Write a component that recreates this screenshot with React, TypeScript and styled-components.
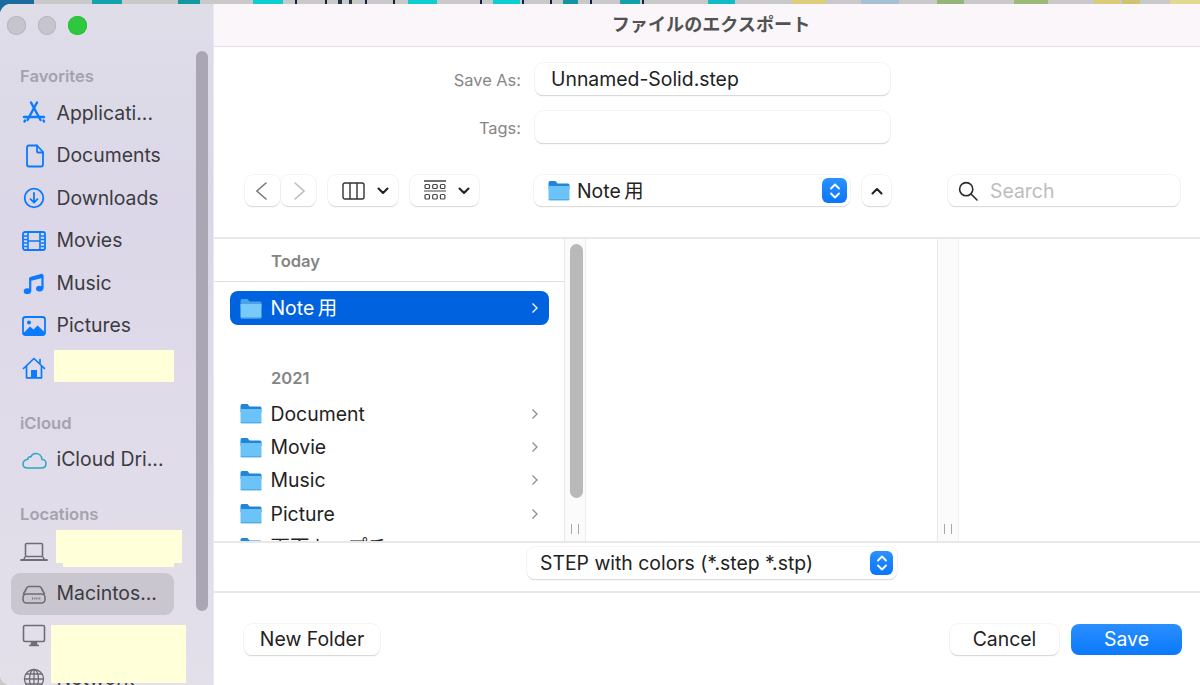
import React from "react";
import styled, { createGlobalStyle } from "styled-components";

const Global = createGlobalStyle`
  html, body { margin: 0; padding: 0; background: #c8c8c8; }
  body { font-family: Inter, "Noto Sans CJK JP", "Liberation Sans", sans-serif; }
  * { box-sizing: border-box; }
`;

const Page = styled.div`
  width: 1200px; height: 685px; overflow: hidden; display: flex; flex-direction: column; background: #c9c9c9;
`;
const Backdrop = styled.svg`
  display: block; width: 1200px; height: 14px; margin-bottom: -10px; flex: none;
`;
const Win = styled.div`
  position: relative; flex: 1; min-height: 0; display: flex; background: #fff;
  border-radius: 11px 0 0 11px; overflow: hidden;
`;
const Side = styled.aside`
  position: relative; width: 214px; flex: none; overflow: hidden;
  background: linear-gradient(180deg, #dfdde8 0%, #dbd7e8 30%, #dfdbe9 60%, #e3e0ea 100%);
  border-right: 1px solid #ece9f0;
`;
const Traffic = styled.div`
  height: 56px; display: flex; gap: 12px; padding: 12px 0 0 7px;
`;
const Light = styled.span<{ $on?: boolean }>`
  width: 18.5px; height: 18.5px; border-radius: 50%;
  background: ${p => (p.$on ? "#2ec840" : "#c6c4cd")};
  box-shadow: inset 0 0 0 1px ${p => (p.$on ? "#2cbf3c" : "#b8b6bf")};
`;
const SideLabel = styled.div<{ $gap?: boolean }>`
  height: 32px; line-height: 33px; padding-left: 20px; font-size: 16.6px; font-weight: 600; color: #a5a2ad;
  margin-top: ${p => (p.$gap ? "17px" : "0")};
`;
const SideRow = styled.div<{ $active?: boolean }>`
  position: relative; height: 42.5px; width: 163px; margin-left: 11px; padding-left: 9px;
  display: flex; align-items: center; gap: 8.5px; font-size: 19.4px; color: #3c3b40; white-space: nowrap;
  border-radius: 9px; background: ${p => (p.$active ? "#c9c6cf" : "transparent")};
`;
const SideText = styled.span`
  padding-bottom: 1px;
`;
const IconCell = styled.span`
  width: 28px; height: 28px; flex: none; display: block;
  svg { display: block; width: 28px; height: 28px; }
`;
const Redact = styled.div<{ $l: number; $t: number; $w: number; $h: number }>`
  position: absolute; z-index: 2; background: #ffffd9;
  left: ${p => p.$l}px; top: ${p => p.$t}px; width: ${p => p.$w}px; height: ${p => p.$h}px;
`;
const SideThumb = styled.div`
  position: absolute; left: 196px; top: 47px; width: 12px; height: 560px; border-radius: 6px; background: #aaa6b3;
`;
const Main = styled.main`
  flex: 1; min-width: 0; display: flex; flex-direction: column;
`;
const TitleBar = styled.header`
  height: 43px; flex: none; display: flex; align-items: center; justify-content: center; padding: 0 0 4px 8px;
  background: #faf6fa; border-bottom: 1px solid #e2e0e2;
  font-family: "Noto Sans CJK JP", sans-serif; font-size: 18.1px; font-weight: 700; color: #525252;
`;
const Form = styled.section`
  height: 192px; flex: none; padding-top: 16px; border-bottom: 2px solid #e8e8e8;
`;
const Field = styled.div`
  display: flex; align-items: center; gap: 14px; margin-bottom: 16px;
`;
const FieldLabel = styled.label`
  width: 307px; text-align: right; font-size: 16.4px; color: #868686; padding-top: 1px;
`;
const Input = styled.div`
  width: 355px; height: 32px; padding-left: 16px; border-radius: 8px; background: #fff;
  display: flex; align-items: center; font-size: 19.4px; color: #222;
  box-shadow: 0 0 0 .5px #ececec, 0 1px 1px 0 #c4c4c4;
`;
const Toolbar = styled.div`
  display: flex; align-items: center; padding: 16px 0 0 31px;
`;
const Btn = styled.div<{ $w: number; $ml?: number; $pl?: number }>`
  width: ${p => p.$w}px; height: 31px; flex: none; margin-left: ${p => p.$ml ?? 0}px; border-radius: 8px; background: #fff;
  padding-left: ${p => p.$pl ?? 0}px;
  display: flex; align-items: center; justify-content: center;
  box-shadow: 0 0 0 .5px #ececec, 0 1px 1px 0 #c8c8c8;
  svg { display: block; }
`;
const PopBtn = styled(Btn)`
  justify-content: flex-start; padding: 0 3px 0 14px; font-size: 19.4px; line-height: 24px; color: #222;
`;
const FolderSlot = styled.span`
  margin-right: 7px; flex: none; display: block; svg { display: block; }
`;
const PopText = styled.span`
  flex: 1; white-space: nowrap;
`;
const Stepper = styled.span<{ $w: number; $h: number }>`
  width: ${p => p.$w}px; height: ${p => p.$h}px; border-radius: 6px; flex: none;
  background: linear-gradient(180deg, #2a91ff, #0a76fb); display: flex; align-items: center; justify-content: center;
`;
const SearchText = styled.span`
  font-size: 19.4px; color: #bdbdbd; margin-left: 12px;
`;
const SearchBtn = styled(Btn)`
  justify-content: flex-start; padding-left: 10px;
`;
const CaretGap = styled.span`
  width: 12px; flex: none;
`;
const Browser = styled.section`
  height: 302px; flex: none; display: flex; overflow: hidden;
`;
const Col = styled.div<{ $w?: number }>`
  width: ${p => (p.$w ? `${p.$w}px` : "auto")}; flex: ${p => (p.$w ? "none" : "1")}; overflow: hidden;
`;
const ColHead = styled.div`
  height: 43px; padding-left: 57px; font-size: 16.6px; font-weight: 600; color: #858585; line-height: 44px;
  border-bottom: 1px solid #e2e2e2; margin-bottom: 9px;
`;
const YearHead = styled.div`
  height: 34px; margin-top: 36px; margin-bottom: 2px; padding-left: 57px; font-size: 16.6px; font-weight: 600; color: #858585; line-height: 34px;
`;
const FileRow = styled.div<{ $sel?: boolean }>`
  height: ${p => (p.$sel ? "34px" : "33.4px")}; margin: 0 15px 0 16px; padding: 0 10px; border-radius: 8px;
  display: flex; align-items: center; font-size: 19.4px; line-height: 24px; white-space: nowrap;
  color: ${p => (p.$sel ? "#fff" : "#222")}; background: ${p => (p.$sel ? "#0062de" : "transparent")};
`;
const FileName = styled.span`
  flex: 1; margin-left: 8.5px;
`;
const Gutter = styled.div`
  position: relative; width: 22px; flex: none; background: #fbfbfb;
  border-left: 1px solid #e8e8e8; border-right: 1px solid #efefef;
`;
const Thumb = styled.div`
  position: absolute; left: 5px; top: 5px; width: 13px; height: 254px; border-radius: 7px; background: #b9b9b9;
`;
const Grip = styled.div`
  position: absolute; left: 6px; bottom: 7px; width: 8px; height: 10px;
  border-left: 1px solid #a8a8a8; border-right: 1px solid #a8a8a8;
`;
const FormatRow = styled.section`
  height: 52px; flex: none; padding: 4px 0 0 313px; border-top: 2px solid #e8e8e8; border-bottom: 2px solid #e8e8e8;
`;
const FormatBtn = styled(PopBtn)`
  height: 32px; padding: 0 4px 0 13px;
`;
const Footer = styled.footer`
  flex: 1; display: flex; justify-content: space-between; padding: 31px 18px 0 30px;
`;
const FootRight = styled.div`
  display: flex; gap: 12px;
`;
const ActionBtn = styled(Btn)<{ $primary?: boolean }>`
  font-size: 19.4px; padding-bottom: 2px; color: ${p => (p.$primary ? "#fff" : "#222")};
  background: ${p => (p.$primary ? "linear-gradient(180deg, #2a8fff, #0a79fb)" : "#fff")};
  box-shadow: ${p => (p.$primary ? "none" : "0 0 0 .5px #ececec, 0 1px 1px 0 #c4c4c4")};
`;

const BLUE = "#0a7aff";
const GRAY = "#6f6c74";
const Ico = ({ children }: { children: React.ReactNode }) => (
  <IconCell>
    <svg viewBox="0 0 28 28" fill="none" strokeLinecap="round" strokeLinejoin="round">{children}</svg>
  </IconCell>
);
const AppsIcon = () => (
  <Ico><g stroke={BLUE} strokeWidth="2.4"><path d="M11 3.5 L20.5 21" /><path d="M17 3.5 L7.5 21" /><path d="M4 18 H24" /><path d="M5 21.5 L4.5 22.5" /><path d="M23.5 21.5 L24 22.5" /></g></Ico>
);
const DocIcon = () => (
  <Ico><g stroke={BLUE} strokeWidth="1.8"><path d="M9 3.5 H17 L23 10 V22.5 Q23 24.5 21 24.5 H9 Q7 24.5 7 22.5 V5.5 Q7 3.5 9 3.5 Z" /><path d="M17 3.5 V9.5 Q17 10.5 18 10.5 H23" /></g></Ico>
);
const DownIcon = () => (
  <Ico><g stroke={BLUE} strokeWidth="1.8"><circle cx="14" cy="14" r="9.3" /><path d="M14 9 V18.5 M10.5 15.2 L14 18.7 L17.5 15.2" /></g></Ico>
);
const FilmIcon = () => (
  <Ico><rect x="3" y="5" width="22" height="18" rx="2" stroke={BLUE} strokeWidth="1.8" /><path d="M8 5 V23 M20 5 V23 M8 14 H20" stroke={BLUE} strokeWidth="1.6" /><path d="M4 9 H7 M4 12.5 H7 M4 16 H7 M4 19.5 H7 M21 9 H24 M21 12.5 H24 M21 16 H24 M21 19.5 H24" stroke={BLUE} strokeWidth="1.5" /></Ico>
);
const MusicIcon = () => (
  <Ico><path d="M10.2 9.5 L22.5 6.5 V19" stroke={BLUE} strokeWidth="2.2" /><path d="M10.2 8 L22.5 4.5 V9 L10.2 12 Z" fill={BLUE} /><path d="M10.2 9.5 V22" stroke={BLUE} strokeWidth="2.2" /><ellipse cx="7.4" cy="22.2" rx="3.6" ry="2.9" fill={BLUE} /><ellipse cx="19.6" cy="19.6" rx="3.6" ry="2.9" fill={BLUE} /></Ico>
);
const PicIcon = () => (
  <Ico><rect x="3" y="5" width="22" height="18" rx="2.5" stroke={BLUE} strokeWidth="1.8" /><circle cx="9" cy="10.5" r="2" fill={BLUE} /><path d="M3.5 21 L10 14.5 L13.5 17.5 L17.5 13.5 L24.5 20 V21 Q24.5 23 22.5 23 H5.5 Q3.5 23 3.5 21 Z" fill={BLUE} /></Ico>
);
const HomeIcon = () => (
  <Ico><g stroke={BLUE} strokeWidth="1.7"><path d="M3.5 14.5 L14 4.5 L24.5 14.5" /><path d="M6.5 12.5 V23.8 H21.5 V12.5" /><path d="M20 5.5 V9" /></g><rect x="11" y="16" width="6" height="8" fill={BLUE} /></Ico>
);
const CloudIcon = () => (
  <Ico><path d="M7.5 22 H21 C24.5 22 26 19.8 26 17.5 C26 15 24 13.4 22 13.4 C21.6 9.5 18.8 7.5 16 7.5 C13.5 7.5 11.6 9 10.8 11 C9.8 10.4 7.8 11 7.8 13.2 C4.5 13.8 3 16 3 18 C3 20.5 5 22 7.5 22 Z" stroke="#2ba5c6" strokeWidth="1.5" /></Ico>
);
const LaptopIcon = () => (
  <Ico><g stroke={GRAY} strokeWidth="1.6"><rect x="5.5" y="6.5" width="17" height="13" rx="1" /><path d="M1 23 H27" strokeWidth="1.8" /><path d="M5 20 L3.5 23 M23 20 L24.5 23" /></g></Ico>
);
const DiskIcon = () => (
  <Ico><g stroke={GRAY} strokeWidth="1.6"><path d="M9 6.5 H19 Q20.5 6.5 21.3 8 L24.5 14 M9 6.5 Q7.5 6.5 6.7 8 L3.5 14 M9 6.5 H19" /><rect x="3" y="14" width="22" height="9" rx="3.5" /><path d="M12 18.5 H21" strokeDasharray="1 1.2" strokeLinecap="butt" strokeWidth="2" /></g></Ico>
);
const DeskIcon = () => (
  <Ico><rect x="3.5" y="3.5" width="21" height="16" rx="1.5" stroke={GRAY} strokeWidth="1.6" /><path d="M11 20 H17 L17.5 23 H10.5 Z" fill={GRAY} /><path d="M9.5 23.5 H18.5" stroke={GRAY} strokeWidth="1.4" /></Ico>
);
const GlobeIcon = () => (
  <Ico><g stroke={GRAY} strokeWidth="1.3"><circle cx="14" cy="14" r="9.5" /><ellipse cx="14" cy="14" rx="4.5" ry="9.5" /><path d="M14 4.5 V23.5 M4.5 14 H23.5 M6 9 H22 M6 19 H22" /></g></Ico>
);
const Folder = ({ light }: { light?: boolean }) => (
  <svg width="22" height="21" viewBox="0 0 22 21">
    <path d="M0.5 3 Q0.5 1 2 1 H7.5 L9.5 3.5 H20 Q21.5 3.5 21.5 5 V9 H0.5 Z" fill={light ? "#4ba3e6" : "#2186d8"} />
    <path d="M0.5 6 H21.5 V19 Q21.5 20.5 20 20.5 H2 Q0.5 20.5 0.5 19 Z" fill={light ? "#78cafa" : "#6cc3f8"} />
    <path d="M0.5 19.6 H21.5" stroke="#3f93cc" strokeOpacity=".55" />
  </svg>
);
const Chev = ({ white }: { white?: boolean }) => (
  <svg width="8" height="12" viewBox="0 0 8 12" fill="none"><path d="M1.5 1.5 L6 6 L1.5 10.5" stroke={white ? "#fff" : "#8e8e8e"} strokeWidth="1.3" /></svg>
);
const Stepper2 = () => (
  <svg width="12" height="18" viewBox="0 0 12 18" fill="none" stroke="#fff" strokeWidth="1.8" strokeLinecap="round" strokeLinejoin="round"><path d="M2 6.5 L6 2.5 L10 6.5 M2 11.5 L6 15.5 L10 11.5" /></svg>
);
const Caret = () => (
  <svg width="12" height="8" viewBox="0 0 12 8" fill="none" stroke="#222" strokeWidth="2.1" strokeLinecap="round" strokeLinejoin="round"><path d="M1.5 1.5 L6 6 L10.5 1.5" /></svg>
);

const strip: [number, number, string][] = [
  [0, 34, "#1b6c9c"], [92, 122, "#14a3ad"], [178, 200, "#109aa0"], [253, 283, "#0ccdd0"], [295, 297, "#124"], [325, 327, "#124"],
  [338, 342, "#234"], [349, 352, "#234"], [365, 367, "#124"], [393, 395, "#124"], [408, 437, "#0ccdd0"], [480, 482, "#124"],
  [493, 520, "#0ccdd0"], [522, 524, "#124"], [550, 552, "#124"], [563, 578, "#1296a4"], [590, 592, "#124"], [620, 640, "#12a0aa"],
  [642, 644, "#124"], [708, 735, "#11bcc4"], [792, 826, "#dccd7a"], [861, 899, "#a9bfd6"], [937, 964, "#93b578"], [1014, 1048, "#9abb78"],
  [1094, 1120, "#d9cb78"], [1122, 1140, "#cfc271"], [1170, 1200, "#e1d98e"],
];

const folderRows = ["Document", "Movie", "Music", "Picture", "画面キャプチャ"];

export default function App() {
  return (
    <Page>
      <Global />
      <Backdrop viewBox="0 0 1200 14">
        <rect width="1200" height="14" fill="#c9c9c9" />
        {strip.map(([a, b, c]) => <rect key={a} x={a} y="0" width={b - a} height="14" fill={c} />)}
      </Backdrop>
      <Win>
        <Side>
          <Traffic><Light /><Light /><Light $on /></Traffic>
          <SideLabel>Favorites</SideLabel>
          <SideRow><AppsIcon /><SideText>Applicati...</SideText></SideRow>
          <SideRow><DocIcon /><SideText>Documents</SideText></SideRow>
          <SideRow><DownIcon /><SideText>Downloads</SideText></SideRow>
          <SideRow><FilmIcon /><SideText>Movies</SideText></SideRow>
          <SideRow><MusicIcon /><SideText>Music</SideText></SideRow>
          <SideRow><PicIcon /><SideText>Pictures</SideText></SideRow>
          <SideRow><HomeIcon /><Redact $l={43} $t={3} $w={120} $h={32} /></SideRow>
          <SideLabel $gap>iCloud</SideLabel>
          <SideRow><CloudIcon /><SideText>iCloud Dri...</SideText></SideRow>
          <SideLabel $gap>Locations</SideLabel>
          <SideRow><LaptopIcon /><Redact $l={45} $t={0} $w={126} $h={33} /><Redact $l={52} $t={33} $w={111} $h={4} /></SideRow>
          <SideRow $active><DiskIcon /><SideText>Macintos...</SideText></SideRow>
          <SideRow><DeskIcon /><Redact $l={40} $t={10} $w={135} $h={58} /></SideRow>
          <SideRow><GlobeIcon /><SideText>Network</SideText></SideRow>
          <SideThumb />
        </Side>
        <Main>
          <TitleBar>ファイルのエクスポート</TitleBar>
          <Form>
            <Field><FieldLabel>Save As:</FieldLabel><Input>Unnamed-Solid.step</Input></Field>
            <Field><FieldLabel>Tags:</FieldLabel><Input /></Field>
            <Toolbar>
              <Btn $w={35}><svg width="14" height="22" viewBox="0 0 14 22" fill="none" stroke="#777" strokeWidth="1.6" strokeLinecap="round"><path d="M10 3 L0.8 11 L10 19" /></svg></Btn>
              <Btn $w={35} $ml={1}><svg width="14" height="22" viewBox="0 0 14 22" fill="none" stroke="#bdbdbd" strokeWidth="1.6" strokeLinecap="round"><path d="M3 3 L12 11 L3 19" /></svg></Btn>
              <Btn $w={70} $ml={12} $pl={4}>
                <svg width="23" height="18" viewBox="0 0 23 18" fill="none" stroke="#333" strokeWidth="1.4"><rect x="1" y="1" width="21" height="16" rx="2" /><path d="M8 1 V17 M15 1 V17" /></svg>
                <CaretGap />
                <Caret />
              </Btn>
              <Btn $w={69} $ml={12} $pl={5}>
                <svg width="22" height="21" viewBox="0 0 22 21" fill="none" stroke="#444" strokeWidth="1.2"><path d="M0 1 H22" strokeWidth="1.6" /><rect x="1" y="4.5" width="4.5" height="4" rx="1" /><rect x="8.7" y="4.5" width="4.5" height="4" rx="1" /><rect x="16.4" y="4.5" width="4.5" height="4" rx="1" /><path d="M0 11 H22" /><rect x="1" y="14.5" width="4.5" height="4.5" rx="1" /><rect x="8.7" y="14.5" width="4.5" height="4.5" rx="1" /><rect x="16.4" y="14.5" width="4.5" height="4.5" rx="1" /></svg>
                <CaretGap />
                <Caret />
              </Btn>
              <PopBtn $w={316} $ml={55}>
                <FolderSlot><Folder /></FolderSlot>
                <PopText>Note{"\u2009"}用</PopText>
                <Stepper $w={25} $h={25}><Stepper2 /></Stepper>
              </PopBtn>
              <Btn $w={29} $ml={12}><svg width="12" height="8" viewBox="0 0 12 8" fill="none" stroke="#222" strokeWidth="2.1" strokeLinecap="round" strokeLinejoin="round"><path d="M1.5 6.5 L6 2 L10.5 6.5" /></svg></Btn>
              <SearchBtn $w={232} $ml={57}>
                <svg width="20" height="20" viewBox="0 0 20 20" fill="none" stroke="#2b2b2b" strokeWidth="1.6" strokeLinecap="round"><circle cx="8.2" cy="8.2" r="6.6" /><path d="M13 13 L19 19" /></svg>
                <SearchText>Search</SearchText>
              </SearchBtn>
            </Toolbar>
          </Form>
          <Browser>
            <Col $w={350}>
              <ColHead>Today</ColHead>
              <FileRow $sel><Folder light /><FileName>Note{"\u2009"}用</FileName><Chev white /></FileRow>
              <YearHead>2021</YearHead>
              {folderRows.map(n => (
                <FileRow key={n}><Folder /><FileName>{n}</FileName><Chev /></FileRow>
              ))}
            </Col>
            <Gutter><Thumb /><Grip /></Gutter>
            <Col $w={351} />
            <Gutter><Grip /></Gutter>
            <Col />
          </Browser>
          <FormatRow>
            <FormatBtn $w={370}>
              <PopText>STEP with colors (*.step *.stp)</PopText>
              <Stepper $w={23} $h={24}><Stepper2 /></Stepper>
            </FormatBtn>
          </FormatRow>
          <Footer>
            <ActionBtn $w={136}>New Folder</ActionBtn>
            <FootRight>
              <ActionBtn $w={109}>Cancel</ActionBtn>
              <ActionBtn $w={111} $primary>Save</ActionBtn>
            </FootRight>
          </Footer>
        </Main>
      </Win>
    </Page>
  );
}
